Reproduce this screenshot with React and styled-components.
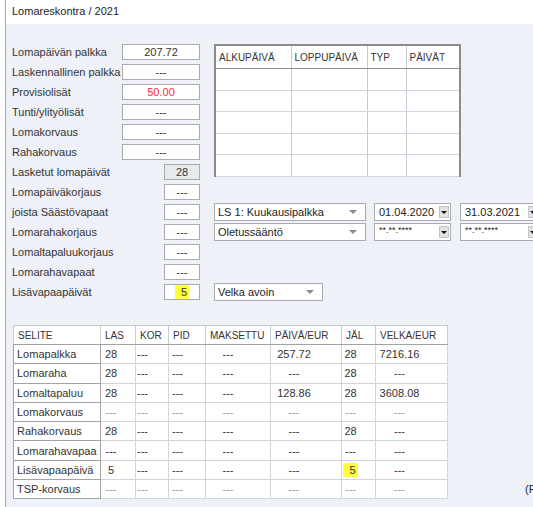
import React from "react";
import styled, { createGlobalStyle } from "styled-components";

const GlobalStyle = createGlobalStyle`
  body {
    margin: 0;
    background: #ffffff;
    font-family: "Liberation Sans", Arial, sans-serif;
  }
`;

const Page = styled.div`
  width: 533px;
  height: 507px;
  overflow: hidden;
  padding-left: 5px;
  box-sizing: border-box;
  background: #ffffff;
`;

const Frame = styled.div`
  height: 100%;
  border-left: 1px solid #a7a7a7;
  display: flex;
  flex-direction: column;
`;

const TitleBar = styled.div`
  height: 24px;
  flex-shrink: 0;
  background: #ffffff;
  padding-left: 6px;
  font-size: 11px;
  line-height: 23px;
  color: #222;
`;

const Content = styled.div`
  flex: 1;
  background: #eef1f8;
  padding: 20px 0 0 6px;
`;

const FormGrid = styled.div`
  display: grid;
  grid-template-columns: 109px 79px 600px;
  grid-template-rows: repeat(13, 16px);
  row-gap: 4px;
`;

const Label = styled.div`
  grid-column: 1;
  font-size: 11px;
  line-height: 16px;
  color: #333;
  white-space: nowrap;
`;

const Field = styled.div`
  grid-column: 2;
  justify-self: end;
  width: ${p => (p.$small ? "36px" : "78px")};
  height: 16px;
  box-sizing: border-box;
  border: 1px solid #a9abb0;
  background: ${p => (p.$disabled ? "#e9eaec" : "#ffffff")};
  color: ${p => (p.$red ? "#ff2a2a" : "#333")};
  font-size: 11px;
  line-height: 14px;
  text-align: center;
`;

const Mark = styled.span`
  background: #ffff3a;
  padding: 1px 2px 1px 6px;
  border-radius: 2px;
`;

const RightCell = styled.div`
  grid-column: 3;
  grid-row: ${p => p.$row};
  padding-left: 14px;
  display: flex;
  align-items: center;
  gap: 8px;
`;

const PeriodTable = styled.table`
  border-collapse: collapse;
  table-layout: fixed;
  width: 247px;
  background: #ffffff;
  border-top: 2px solid #8c8c8c;
  border-left: 2px solid #8c8c8c;
  border-right: 2px solid #8c8c8c;
  align-self: flex-start;

  th {
    height: 22px;
    text-align: left;
    font-weight: normal;
    font-size: 10px;
    color: #333;
    padding: 0 3px;
    border-bottom: 1px solid #8c8c8c;
    border-right: 1px solid #c6c8d4;
  }
  td {
    height: 20.5px;
    padding: 0;
    border-bottom: 1px solid #d2d4de;
    border-right: 1px solid #c6c8d4;
  }
`;

const Select = styled.div`
  width: ${p => p.$w}px;
  height: 18px;
  box-sizing: border-box;
  border: 1px solid #a9abb0;
  background: #ffffff;
  font-size: 11px;
  line-height: 16px;
  color: #222;
  padding-left: 3px;
  display: flex;
  justify-content: space-between;
  align-items: center;
  flex-shrink: 0;

  &::after {
    content: "";
    margin-right: 8px;
    border-left: 4px solid transparent;
    border-right: 4px solid transparent;
    border-top: 4px solid #8a8a8a;
  }
`;

const DateBox = styled.div`
  width: ${p => p.$w}px;
  height: 18px;
  box-sizing: border-box;
  border: 1px solid #a9abb0;
  background: #ffffff;
  font-size: ${p => (p.$mask ? "9px" : "11px")};
  line-height: ${p => (p.$mask ? "12px" : "16px")};
  color: #222;
  padding: 0 1px 0 4px;
  display: flex;
  justify-content: space-between;
  align-items: ${p => (p.$mask ? "flex-start" : "center")};
  flex-shrink: 0;
  margin-left: ${p => p.$ml || 0}px;
`;

const DropButton = styled.span`
  width: 10px;
  height: 12px;
  margin-top: ${p => (p.$mask ? "2px" : "0")};
  background: #e2e2e2;
  border: 1px solid #c4c4c4;
  box-sizing: border-box;
  display: flex;
  align-items: center;
  justify-content: center;

  &::before {
    content: "";
    border-left: 3px solid transparent;
    border-right: 3px solid transparent;
    border-top: 3px solid #111;
  }
`;

const Bottom = styled.div`
  display: flex;
  align-items: flex-end;
  margin-top: 25px;
  padding-left: 1px;
`;

const LedgerTable = styled.table`
  border-collapse: collapse;
  table-layout: fixed;
  width: 434px;
  background: #ffffff;
  border: 1px solid #a3a3a3;
  font-size: 11px;
  color: #333;

  th {
    height: 18px;
    text-align: left;
    font-weight: normal;
    font-size: 10px;
    padding: 0 0 0 4px;
    border: 1px solid #c9cbd4;
    border-bottom: 1px solid #a3a3a3;
    white-space: nowrap;
  }
  td {
    height: 18.3px;
    padding: 0;
    border: 1px solid #d2d4dd;
    text-align: center;
    white-space: nowrap;
  }
  td:first-child {
    text-align: left;
    padding-left: 3px;
    border: 1px solid #a3a3a3;
  }
`;

const Val = styled.td`
  && {
    padding-right: ${p => p.$pr}px;
    color: ${p => (p.$faint ? "#9a9a9a" : "#333")};
  }
`;

const Note = styled.div`
  margin-left: 77px;
  margin-bottom: 4px;
  font-size: 11px;
  color: #222;
  white-space: nowrap;
`;

const leftRows = [
  { label: "Lomapäivän palkka", value: "207.72" },
  { label: "Laskennallinen palkka", value: "---" },
  { label: "Provisiolisät", value: "50.00", red: true },
  { label: "Tunti/ylityölisät", value: "---" },
  { label: "Lomakorvaus", value: "---" },
  { label: "Rahakorvaus", value: "---" },
  { label: "Lasketut lomapäivät", value: "28", small: true, disabled: true },
  { label: "Lomapäiväkorjaus", value: "---", small: true },
  { label: "joista Säästövapaat", value: "---", small: true },
  { label: "Lomarahakorjaus", value: "---", small: true },
  { label: "Lomaltapaluukorjaus", value: "---", small: true },
  { label: "Lomarahavapaat", value: "---", small: true },
  { label: "Lisävapaapäivät", value: "5", small: true, mark: true }
];

const pad = [0, 14, 19, 19, 20, 24, 16, 24];

const ledger = [
  ["Lomapalkka", "28", "---", "---", "---", "257.72", "28", "7216.16"],
  ["Lomaraha", "28", "---", "---", "---", "---", "28", "---"],
  ["Lomaltapaluu", "28", "---", "---", "---", "128.86", "28", "3608.08"],
  ["Lomakorvaus", "---", "---", "---", "---", "---", "---", "---", true],
  ["Rahakorvaus", "28", "---", "---", "---", "---", "28", "---"],
  ["Lomarahavapaa", "---", "---", "---", "---", "---", "---", "---"],
  ["Lisävapaapäivä", "5", "---", "---", "---", "---", "5*", "---"],
  ["TSP-korvaus", "---", "---", "---", "---", "---", "---", "---", true]
];

const widths = [87, 35, 33, 37, 65, 71, 34, 72];
const heads = ["SELITE", "LAS", "KOR", "PID", "MAKSETTU", "PÄIVÄ/EUR", "JÄL", "VELKA/EUR"];

export default function App() {
  return (
    <Page>
      <GlobalStyle />
      <Frame>
        <TitleBar>Lomareskontra / 2021</TitleBar>
        <Content>
          <FormGrid>
            {leftRows.map((r, i) => (
              <React.Fragment key={r.label}>
                <Label style={{ gridRow: i + 1 }}>{r.label}</Label>
                <Field
                  style={{ gridRow: i + 1 }}
                  $small={r.small}
                  $disabled={r.disabled}
                  $red={r.red}
                >
                  {r.mark ? <Mark>{r.value}</Mark> : r.value}
                </Field>
              </React.Fragment>
            ))}

            <RightCell $row="1 / 8" style={{ alignItems: "flex-start" }}>
              <PeriodTable>
                <colgroup>
                  <col style={{ width: 76 }} />
                  <col style={{ width: 76 }} />
                  <col style={{ width: 39 }} />
                  <col style={{ width: 54 }} />
                </colgroup>
                <thead>
                  <tr>
                    <th>ALKUPÄIVÄ</th>
                    <th>LOPPUPÄIVÄ</th>
                    <th>TYP</th>
                    <th>PÄIVÄT</th>
                  </tr>
                </thead>
                <tbody>
                  {[0, 1, 2, 3, 4].map(n => (
                    <tr key={n}>
                      <td />
                      <td />
                      <td />
                      <td />
                    </tr>
                  ))}
                </tbody>
              </PeriodTable>
            </RightCell>

            <RightCell $row="9">
              <Select $w={152}>LS 1: Kuukausipalkka</Select>
              <DateBox $w={77}>
                01.04.2020
                <DropButton />
              </DateBox>
              <DateBox $w={80} $ml={1}>
                31.03.2021
                <DropButton />
              </DateBox>
            </RightCell>
            <RightCell $row="10">
              <Select $w={152}>Oletussääntö</Select>
              <DateBox $w={77} $mask>
                **.**.****
                <DropButton $mask />
              </DateBox>
              <DateBox $w={80} $ml={1} $mask>
                **.**.****
                <DropButton $mask />
              </DateBox>
            </RightCell>
            <RightCell $row="13">
              <Select $w={109}>Velka avoin</Select>
            </RightCell>
          </FormGrid>

          <Bottom>
            <LedgerTable>
              <colgroup>
                {widths.map((w, i) => (
                  <col key={i} style={{ width: w }} />
                ))}
              </colgroup>
              <thead>
                <tr>
                  {heads.map(h => (
                    <th key={h}>{h}</th>
                  ))}
                </tr>
              </thead>
              <tbody>
                {ledger.map(row => (
                  <tr key={row[0]}>
                    <td>{row[0]}</td>
                    {row.slice(1, 8).map((v, i) => (
                      <Val key={i} $pr={pad[i + 1]} $faint={row[8] && v === "---"}>
                        {v === "5*" ? <Mark>5</Mark> : v}
                      </Val>
                    ))}
                  </tr>
                ))}
              </tbody>
            </LedgerTable>
            <Note>(P</Note>
          </Bottom>
        </Content>
      </Frame>
    </Page>
  );
}
